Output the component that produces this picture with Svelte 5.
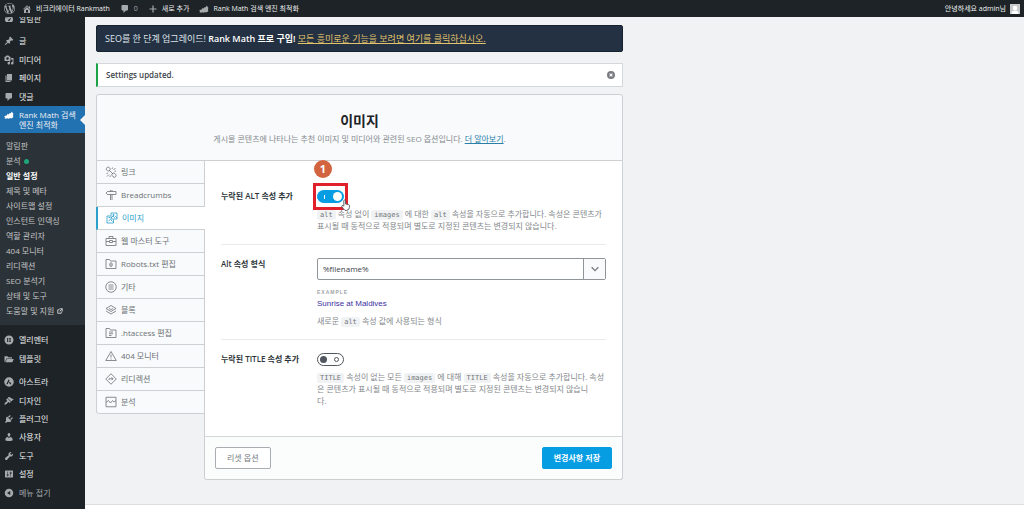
<script>
  const dash = {
    dashboard: 'M3.76 16h12.48A7.98 7.98 0 0 0 10 3a7.98 7.98 0 0 0-6.24 13zM10 4.5a1 1 0 1 1 0 2 1 1 0 0 1 0-2zM6 6.500a1 1 0 1 1 0 2 1 1 0 0 1 0-2zm7.400 1.200l.7.700-2.700 4.100a1.600 1.600 0 1 1-1.900-1.500z',
    pin: 'M10.44 3.02l1.82-1.82 6.36 6.35-1.83 1.82c-1.05-.68-2.48-.57-3.41.36l-.75.75c-.92.93-1.04 2.35-.35 3.41l-1.83 1.82-2.41-2.41-2.8 2.79c-.42.42-3.38 2.71-3.8 2.29s1.86-3.39 2.28-3.81l2.79-2.79L4.1 9.36l1.83-1.82c1.05.69 2.48.57 3.4-.36l.75-.75c.93-.92 1.05-2.35.36-3.41z',
    media: 'M13 11V4c0-.55-.45-1-1-1h-1.67L9 1H5L3.67 3H2c-.55 0-1 .45-1 1v7c0 .55.45 1 1 1h10c.55 0 1-.45 1-1zM7 4.500c1.380 0 2.500 1.120 2.500 2.500S8.380 9.500 7 9.500 4.500 8.380 4.500 7 5.620 4.500 7 4.500zM14 6h5v10.500c0 1.380-1.120 2.500-2.500 2.500S14 17.880 14 16.500s1.120-2.500 2.500-2.500c.17 0 .34.02.5.05V9h-3V6zm-4 8.050V13h2v3.500c0 1.380-1.120 2.500-2.500 2.500S7 17.880 7 16.500 8.120 14 9.500 14c.17 0 .34.02.5.05z',
    page: 'M6 15V2h10v13H6zm-1 1h8v2H3V5h2v11z',
    comment: 'M5 2h9c1.1 0 2 .9 2 2v7c0 1.1-.9 2-2 2h-2l-5 5v-5H5c-1.100 0-2-.9-2-2V4c0-1.100.9-2 2-2z',
    home: 'M16 8.500l1.530 1.530-1.060 1.060L10 4.600l-6.470 6.490-1.060-1.060L10 2.500l4 4v-2h2v4zm-6-2.460l6 5.990V18H4v-5.970zM12 17v-5H8v5h4z',
    users: 'M10 9.250c-2.270 0-2.730-3.440-2.730-3.440C7 4.020 7.820 2 9.970 2c2.160 0 2.980 2.020 2.710 3.810 0 0-.41 3.440-2.680 3.440zm0 2.570L12.720 10c2.390 0 4.520 2.330 4.520 4.530v2.490s-3.650 1.130-7.240 1.130c-3.650 0-7.240-1.130-7.240-1.130v-2.490c0-2.250 1.940-4.480 4.470-4.480z',
    tools: 'M16.68 9.770c-1.340 1.340-3.300 1.670-4.950.99l-5.410 6.520c-.99.99-2.590.99-3.580 0s-.99-2.590 0-3.570l6.520-5.420c-.68-1.650-.35-3.610.99-4.950 1.280-1.280 3.120-1.620 4.720-1.060l-2.890 2.890 2.820 2.820 2.860-2.870c.53 1.580.18 3.390-1.080 4.650z',
    settings: 'M18 16V4c0-.55-.45-1-1-1H3c-.55 0-1 .45-1 1v12c0 .55.45 1 1 1h14c.55 0 1-.45 1-1zM8 11h1c.55 0 1 .45 1 1s-.45 1-1 1H8v1.500c0 .28-.22.5-.5.5s-.5-.22-.5-.5V13H6c-.55 0-1-.45-1-1s.45-1 1-1h1V5.500c0-.28.22-.5.5-.5s.5.22.5.5V11zm5-2h-1c-.55 0-1-.45-1-1s.45-1 1-1h1V5.500c0-.28.22-.5.5-.5s.5.22.5.5V7h1c.55 0 1 .45 1 1s-.45 1-1 1h-1v5.500c0 .28-.22.5-.5.5s-.5-.22-.5-.5V9z',
    plugins: 'M13.11 4.360L9.870 7.600 8 5.730l3.240-3.240c.35-.34 1.050-.2 1.560.32.52.51.66 1.210.31 1.550zm-8 1.770l.91-1.120 9.010 9.010-1.190.84c-.71.71-2.630 1.160-3.820 1.160H6.140L4.900 17.260c-.59.59-1.540.59-2.120 0-.59-.58-.59-1.530 0-2.120l1.240-1.240v-3.880c0-1.130.4-3.190 1.090-3.890zm7.260 3.970l3.240-3.240c.34-.35 1.040-.21 1.550.31.52.51.66 1.210.31 1.550l-3.240 3.250z',
    design: 'M14.48 11.060L7.410 3.990l1.500-1.500c.5-.56 2.300-.47 3.510.32 1.210.8 1.430 1.280 2.910 2.100 1.180.64 2.450 1.260 4.450.85zm-.71.71L6.700 4.700 4.930 6.470c-.39.39-.39 1.020 0 1.410l1.060 1.060c.39.39.39 1.030 0 1.420-.6.6-1.430 1.110-2.210 1.690-.35.26-.7.53-1.010.84C1.430 14.230.4 16.080 1.400 17.070c.99 1 2.840-.03 4.180-1.360.31-.31.58-.66.85-1.020.57-.78 1.080-1.610 1.690-2.210.39-.39 1.020-.39 1.410 0l1.060 1.060c.39.39 1.020.39 1.410 0z',
    collapse: 'M10 1.500a8.500 8.500 0 1 1 0 17 8.500 8.500 0 0 1 0-17zm2.500 12.700V5.800L6.200 10z',
    elementor: 'M10 1a9 9 0 1 1 0 18 9 9 0 0 1 0-18zM6 6v8h1.700V6zm3.300 0v1.700H14V6zm0 3.200v1.600H14V9.200zm0 3.100V14H14v-1.700z',
    folder: 'M1 16V4.500h6l1.500 2H16v2.300H5.200L2.500 15zM6 10h13.500l-2.800 6.500H2.800z',
    astra: 'M10 .5a9.500 9.500 0 1 1 0 19 9.500 9.500 0 0 1 0-19zM9.400 4.500L4.500 14.500h2.700l3.800-7.400zm2.300 4.400l-1.900 3.700h1.500l.8 1.900h2.900z',
    rankmath: 'M.5 12.500l5.500-1.800 1.200-3 2.300 1.500L11.500 6l2.300.6L15.500 3l3.700 5.600-1.300.3.600 5.800-4 2.300-2-.8-3 1.200-2.500-.9-2.900 1.200-3.300-1.400 1.300-1.300z',
    plus: 'M17 8.800H11.200V3H8.800v5.800H3v2.400h5.800V17h2.400v-5.800H17z',
    dismiss: 'M10 2a8 8 0 1 1 0 16 8 8 0 0 1 0-16zm3.500 10.200L11.400 10l2.100-2.200-1.300-1.300L10 8.600 7.800 6.500 6.500 7.800 8.600 10l-2.100 2.200 1.300 1.300 2.200-2.100 2.200 2.100z',
    wp: 'M20 10c0-5.510-4.490-10-10-10C4.480 0 0 4.490 0 10c0 5.520 4.480 10 10 10 5.510 0 10-4.480 10-10zM7.780 15.370L4.370 6.220c.55-.02 1.170-.08 1.170-.08.5-.06.44-1.130-.06-1.110 0 0-1.450.11-2.370.11-.18 0-.37 0-.58-.01C4.120 2.690 6.870 1.110 10 1.110c2.330 0 4.450.87 6.050 2.340-.68-.11-1.650.39-1.650 1.580 0 .74.45 1.360.9 2.100.35.61.55 1.360.55 2.460 0 1.490-1.400 5-1.400 5l-3.030-8.370c.54-.02.82-.17.82-.17.5-.05.44-1.250-.06-1.220 0 0-1.440.12-2.380.12-.87 0-2.330-.12-2.330-.12-.5-.03-.56 1.200-.06 1.220l.92.08 1.260 3.410zM17.410 10c.24-.64.74-1.870.43-4.250.7 1.290 1.050 2.710 1.050 4.250 0 3.290-1.730 6.240-4.400 7.780.97-2.590 1.940-5.200 2.920-7.780zM6.100 18.090C3.120 16.650 1.110 13.530 1.110 10c0-1.300.23-2.480.72-3.590C3.250 10.300 4.670 14.200 6.100 18.090zm4.030-6.630l2.580 6.980c-.86.29-1.760.45-2.710.45-.79 0-1.570-.11-2.290-.33.81-2.380 1.620-4.740 2.420-7.100z',
  };

  const content = [['pin', '글'], ['media', '미디어'], ['page', '페이지'], ['comment', '댓글']];
  const builder = [['elementor', '엘리멘터'], ['folder', '템플릿']];
  const system = [
    ['astra', '아스트라'], ['design', '디자인'], ['plugins', '플러그인'], ['users', '사용자'],
    ['tools', '도구'], ['settings', '설정'],
  ];
  const sub = [
    '알림판', '분석', '일반 설정', '제목 및 메타', '사이트맵 설정', '인스턴트 인덱싱',
    '역할 관리자', '404 모니터', '리디렉션', 'SEO 분석기', '상태 및 도구', '도움말 및 지원',
  ];

  const folderOutline = 'M2 21V3h7l2 3h11v15z';
  const tabs = [
    ['링크', 'M3 4.500a3.500 3.500 0 0 1 6-1l1 1.500a3.500 3.500 0 0 1-5 4.500L3.500 8A3 3 0 0 1 3 4.500zM14 16a3.500 3.500 0 0 1 5-1.500l2 2a3.500 3.500 0 0 1-5 5l-1.500-2A3 3 0 0 1 14 16zM8 8l8 8M15 3l-1 3M21 4l-4 4M22 10l-3 .5M3 15l3-1M4 21l4-4M10 22l.5-3'],
    ['Breadcrumbs', 'M11 2v3M11 11v11M14 11v11M14 2v3M2 8l3-3h17v6H5z'],
    ['이미지', 'M10 2h12v12H10zM9 8H2v14h13v-7M10 12l4-4 3 3 2-2 3 3M5 18l4-3 4 4M14 5h2v2h-2zM5 11h3'],
    ['웹 마스터 도구', 'M2 7h20v14H2zM8 7V3h8v4M2 13h7M15 13h7M9 11h6v4H9z'],
    ['Robots.txt 편집', folderOutline + 'M12 9.500a2.500 3.500 0 1 1 0 7.500 2.500 3.500 0 0 1 0-7.500zM12 12v2.500'],
    ['기타', 'M12 1.500a10.500 10.500 0 1 1 0 21 10.500 10.500 0 0 1 0-21zM7 8h10M7 12h10M7 16h10'],
    ['블록', 'M12 3l10 6-10 6L2 9zM2 14l10 6 10-6M8 9l4 2 4-2'],
    ['.htaccess 편집', folderOutline + 'M8 10h8M8 13.500h8M8 17h5'],
    ['404 모니터', 'M12 3l10.500 18h-21zM12 9v6M12 17v2'],
    ['리디렉션', 'M12 1.500L22.500 12 12 22.500 1.500 12zM8 14v-2.500h8M13 8.500l3 3-3 3'],
    ['분석', 'M2 2.500h20v19H2zM2 13l5-4 4 5 4-5 3 3 4-3'],
  ];

  let addAlt = $state(true);
  let addTitle = $state(false);
  let format = $state('%filename%');
</script>

{#snippet icon(name)}
  <svg class="dash" viewBox="0 0 20 20" aria-hidden="true"><path fill-rule="evenodd" d={dash[name]} /></svg>
{/snippet}

{#snippet item([name, label])}
  <li class="row"><a href="#{name}">{@render icon(name)}<span>{label}</span></a></li>
{/snippet}

<header class="bar">
  <a href="#wp" class="logo" aria-label="WordPress">{@render icon('wp')}</a>
  <a href="#site" class="site">{@render icon('home')}<span>비크리에이터 Rankmath</span></a>
  <a href="#comments" class="count">{@render icon('comment')}<span>0</span></a>
  <a href="#new">{@render icon('plus')}<span>새로 추가</span></a>
  <a href="#rm">{@render icon('rankmath')}<span>Rank Math 검색 엔진 최적화</span></a>
  <a href="#me" class="me"><span>안녕하세요 admin님</span>
    <svg class="avatar" viewBox="0 0 20 20" aria-hidden="true"><rect width="20" height="20" fill="#c8cacc" /><circle cx="10" cy="8" r="4.500" fill="#fff" /><path d="M3 20c0-5 3-7 7-7s7 2 7 7z" fill="#fff" /></svg>
  </a>
</header>

<div class="shell">
  <nav class="side">
    <ul class="menu">
      <li class="first"><a href="#dashboard">{@render icon('dashboard')}<span>알림판</span></a></li>
      {#each content as entry}{@render item(entry)}{/each}
      <li class="current"><a href="#rank-math">{@render icon('rankmath')}<span>Rank Math 검색<br />엔진 최적화</span></a></li>
      <li class="subwrap">
        <ul class="sub">
          {#each sub as label, i}
            <li class:on={i === 2}>
              <a href="#sub{i}">{label}
                {#if i === 1}<i class="dot"></i>{/if}
                {#if i === 11}
                  <svg class="ext" viewBox="0 0 12 12" aria-hidden="true"><path d="M5 3.500H1.500v7h7V7M5 1.500h5.500V7M10.500 1.500l-5 5" /></svg>
                {/if}
              </a>
            </li>
          {/each}
        </ul>
      </li>
      {#each builder as entry}{@render item(entry)}{/each}
      <li class="gap"></li>
      {#each system as entry}{@render item(entry)}{/each}
      <li class="row collapse"><button type="button">{@render icon('collapse')}<span>메뉴 접기</span></button></li>
    </ul>
  </nav>

  <div class="page">
    <main>
      <p class="promo">SEO를 한 단계 업그레이드! <b>Rank Math 프로 구입!</b> <a href="#pro">모든 흥미로운 기능을 보려면 여기를 클릭하십시오.</a></p>

      <div class="notice"><b>Settings updated.</b><button type="button" aria-label="닫기">{@render icon('dismiss')}</button></div>

      <form class="card" onsubmit={(e) => e.preventDefault()}>
        <div class="head">
          <h1>이미지</h1>
          <p>게시물 콘텐츠에 나타나는 추천 이미지 및 미디어와 관련된 SEO 옵션입니다. <a href="#more">더 알아보기</a>.</p>
        </div>
        <div class="body">
          <div class="tabs">
            {#each tabs as [label, d], i}
              <a href="#tab{i}" class:active={i === 2}>
                <svg viewBox="0 0 24 24" aria-hidden="true"><path {d} /></svg><span>{label}</span>
              </a>
            {/each}
          </div>
          <div class="panel">
            <div class="field top">
              <label class="name" for="add-alt">누락된 ALT 속성 추가</label>
              <div class="value">
                <div class="mark">
                  <input id="add-alt" class="switch" type="checkbox" bind:checked={addAlt} />
                  <span class="frame"></span>
                  <span class="badge">1</span>
                  <svg class="hand" viewBox="0 0 16 20" aria-hidden="true"><path d="M5 12V2.500a1.500 1.500 0 0 1 3 0V8l5.500 1.200q1.500.4 1.500 2V14q0 5-5 5.500H7Q5 18 1.200 12.500q0-2 2-1.500z" /></svg>
                </div>
                <p><code>alt</code> 속성 없이 <code>images</code> 에 대한 <code>alt</code> 속성을 자동으로 추가합니다. 속성은 콘텐츠가<br />표시될 때 동적으로 적용되며 별도로 지정된 콘텐츠는 변경되지 않습니다.</p>
              </div>
            </div>
            <div class="field">
              <label class="name" for="format">Alt 속성 형식</label>
              <div class="value">
                <div class="combo">
                  <input id="format" type="text" bind:value={format} />
                  <button type="button" aria-label="변수 선택"><svg viewBox="0 0 12 12" aria-hidden="true"><path d="M2 4l4 4 4-4" /></svg></button>
                </div>
                <div class="example">EXAMPLE</div>
                <div class="sample">Sunrise at Maldives</div>
                <p>새로운 <code>alt</code> 속성 값에 사용되는 형식</p>
              </div>
            </div>
            <div class="field last">
              <label class="name" for="add-title">누락된 TITLE 속성 추가</label>
              <div class="value">
                <input id="add-title" class="switch" type="checkbox" bind:checked={addTitle} />
                <p><code>TITLE</code> 속성이 없는 모든 <code>images</code> 에 대해 <code>TITLE</code> 속성을 자동으로 추가합니다. 속성<br />은 콘텐츠가 표시될 때 동적으로 적용되며 별도로 지정된 콘텐츠는 변경되지 않습니<br />다.</p>
              </div>
            </div>
            <div class="actions">
              <button type="button">리셋 옵션</button>
              <button type="submit" class="save">변경사항 저장</button>
            </div>
          </div>
        </div>
      </form>
    </main>
    <div class="foot"></div>
  </div>
</div>

<style>
  :global(body) {
    background: #f0f2f4;
    font: 8px/12px "Open Sans", "Noto Sans CJK KR", sans-serif;
    color: #3c434a;
  }
  :global(#app) { overflow: hidden; }
  *, *::before, *::after { box-sizing: border-box; }
  ul, p, h1 { margin: 0; padding: 0; list-style: none; }
  button, input { font: inherit; color: inherit; margin: 0; }
  button { padding: 0; border: 0; background: none; cursor: pointer; }
  .dash { width: 10px; height: 10px; flex: none; fill: #a7aaad; }

  .bar { display: flex; align-items: center; height: 17px; padding: 0 4px; background: #1d2327; color: #f0f0f1; font-size: 7px; }
  .bar a { display: flex; align-items: center; gap: 4px; color: inherit; text-decoration: none; white-space: nowrap; margin-right: 10px; }
  .bar .logo { margin-right: 7px; }
  .bar .logo .dash { width: 11px; height: 11px; }
  .bar .me { margin: 0 0 0 auto; }
  .count span { color: #a7aaad; }
  .avatar { width: 10px; height: 10px; }

  .shell { display: flex; height: calc(100vh - 17px); }
  .side { flex: none; width: 85px; background: #1d2327; overflow: hidden; }
  .menu { display: flex; flex-direction: column; height: 100%; padding-bottom: 7px; }
  .menu a, .menu button { display: flex; align-items: center; gap: 5px; width: 100%; height: 100%; padding-left: 4px; color: #f0f0f1; text-decoration: none; }
  .first { flex: none; height: 18px; margin: -7px 0 4px; }
  .row { flex: 1 1 18px; min-height: 0; }
  .current { flex: none; height: 27px; background: #2271b1; position: relative; line-height: 10px; }
  .current::after { content: ""; position: absolute; right: 0; top: 9px; border: 5px solid transparent; border-left: 0; border-right-color: #f0f2f4; }
  .menu .current a { align-items: flex-start; padding-top: 4px; }
  .current .dash { fill: #fff; }
  .subwrap { flex: none; background: #2c3338; padding: 6px 0; margin-bottom: 6px; }
  .sub a { height: 15px; gap: 3px; padding-left: 6px; color: #c3c4c7; white-space: nowrap; }
  .sub .on a { color: #fff; font-weight: 700; }
  .dot { width: 5px; height: 5px; border-radius: 50%; background: #1fa67a; }
  .ext { width: 6px; height: 6px; fill: none; stroke: #c3c4c7; stroke-width: 2; }
  .gap { flex: none; height: 5px; }
  .menu .collapse button { color: #a7aaad; }

  .page { flex: 1; min-width: 0; display: flex; flex-direction: column; justify-content: space-between; }
  main { max-width: 549px; padding: 8px 11px 0; }
  .foot { height: 5px; background: #fff; border-top: 1px solid #dcdee0; }

  .promo { height: 27px; padding: 0 8px; background: #233142; border: 1px solid #17222f; border-radius: 2px; color: #dfe4ea; font-size: 9px; line-height: 25px; white-space: nowrap; }
  .promo b { color: #fff; font-weight: 600; }
  .promo a { color: #e2c26b; }

  .notice { display: flex; align-items: center; justify-content: space-between; height: 24px; margin-top: 11px; padding: 0 6px 0 8px; background: #fff; border: 1px solid #d5d8db; border-left: 2px solid #1ba345; }
  .notice b { font-weight: 600; }
  .notice button { display: flex; }
  .notice .dash { fill: #787c82; }

  .card { margin-top: 7px; }
  .head { height: 67px; padding-top: 16px; background: #f8fafb; border: 1px solid #ccd0d3; border-radius: 3px 3px 0 0; text-align: center; }
  h1 { font-size: 14px; line-height: 20px; font-weight: 700; color: #1d2327; }
  .head p { margin-top: 2px; color: #878b90; }
  .head a { color: #2a7ea8; }

  .body { display: flex; align-items: flex-start; }
  .tabs { flex: none; width: 108px; border-left: 1px solid #ccd0d3; border-radius: 0 0 0 3px; background: #f8fafb; }
  .tabs a { display: flex; align-items: center; gap: 4px; height: 23px; padding-left: 8px; border-bottom: 1px solid #ccd0d3; color: #6c7176; text-decoration: none; white-space: nowrap; }
  .tabs a:last-child { border-radius: 0 0 0 3px; }
  .tabs svg { width: 12px; height: 12px; fill: none; stroke: currentColor; stroke-width: 1.6; }
  .tabs .active { background: #fff; color: #2ba0cb; margin: 0 -1px; border-left: 2px solid #2ba0cb; position: relative; }

  .panel { flex: 1; min-width: 0; background: #fff; border: 1px solid #ccd0d3; border-top: 0; border-radius: 0 0 3px 3px; }
  .field { display: flex; margin: 0 16px; padding: 13px 0 12px; border-bottom: 1px solid #e8eaec; }
  .field.top { padding-top: 29px; }
  .field.last { padding-bottom: 29px; border-bottom: 0; }
  .name { flex: none; width: 96px; font-weight: 600; color: #2c3338; }
  .value { flex: 1; min-width: 0; }
  .value p { margin-top: 5px; color: #83878b; white-space: nowrap; }
  code { font: 7px/10px "DejaVu Sans Mono", monospace; padding: 1px 3px; border-radius: 2px; background: #f1f2f3; color: #70757a; }

  .switch { display: block; appearance: none; position: relative; width: 27px; height: 13px; border: 1px solid #50575e; border-radius: 7px; background: #fff; }
  .switch::before { content: ""; position: absolute; left: 2px; top: 2px; width: 7px; height: 7px; border-radius: 50%; background: #50575e; }
  .switch::after { content: ""; position: absolute; right: 4px; top: 3px; width: 5px; height: 5px; border-radius: 50%; border: 1px solid #50575e; }
  .switch:checked { background: #069de3; border-color: #069de3; }
  .switch:checked::before { left: 6px; top: 4px; width: 1px; height: 4px; border-radius: 0; background: #fff; }
  .switch:checked::after { right: 1px; top: 1px; width: 9px; height: 9px; border: 0; background: #fff; }

  .mark { position: relative; width: 27px; }
  .frame { position: absolute; inset: -7px -4px; border: 3px solid #e0202b; pointer-events: none; }
  .badge { position: absolute; left: -3px; top: -30px; width: 18px; height: 18px; border-radius: 50%; background: #d2643f; color: #fff; font-size: 11px; line-height: 18px; font-weight: 700; text-align: center; }
  .hand { position: absolute; left: 24px; top: 9px; width: 9px; height: 12px; fill: #fff; stroke: #50575e; stroke-width: 1.6; pointer-events: none; }

  .combo { display: flex; height: 22px; border: 1px solid #8f9499; border-radius: 2px; }
  .combo input { flex: 1; min-width: 0; border: 0; padding: 0 5px; background: none; outline: 0; }
  .combo button { display: grid; place-items: center; width: 22px; border-left: 1px solid #8f9499; background: #f8fafb; }
  .combo svg { width: 10px; height: 10px; fill: none; stroke: #787c82; stroke-width: 1.6; }
  .example { margin-top: 6px; font: 700 5px/12px "Liberation Sans", sans-serif; letter-spacing: 1px; color: #a0a4a8; }
  .sample { font: 8px/12px "Liberation Sans", sans-serif; color: #3b2fa0; }

  .actions { display: flex; justify-content: space-between; padding: 10px; border-top: 1px solid #d5d8db; border-radius: 0 0 3px 3px; background: #fbfcfc; }
  .actions button { height: 22px; padding: 0 11px; border: 1px solid #a9adb1; border-radius: 2px; background: #fff; color: #787c82; }
  .actions .save { background: #069de3; border-color: #069de3; color: #fff; font-weight: 600; }
</style>
